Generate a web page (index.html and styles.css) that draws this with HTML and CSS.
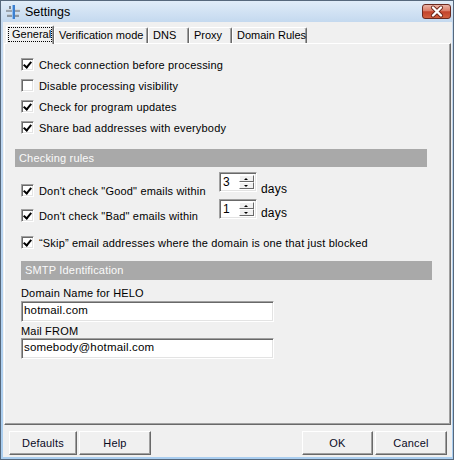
FILE: index.html
```html
<!DOCTYPE html>
<html>
<head>
<meta charset="utf-8">
<link rel="stylesheet" href="styles.css">
</head>
<body>
<div class="window">
  <div class="titlebar">
    <svg class="app-icon" width="16" height="16" viewBox="0 0 16 16">
      <rect x="1" y="5" width="14" height="3" fill="#9aa3ad"/>
      <rect x="1" y="5" width="14" height="1" fill="#d5dbe1"/>
      <rect x="2" y="10" width="12" height="3" fill="#8c96a0"/>
      <rect x="2" y="10" width="12" height="1" fill="#c9d0d6"/>
      <rect x="7" y="1" width="3" height="14" fill="#3b7fd0"/>
      <rect x="7" y="1" width="1" height="14" fill="#8fbcee"/>
      <rect x="4" y="2" width="2" height="3" fill="#7a838c"/>
    </svg>
    <span class="title">Settings</span>
    <div class="close">
      <svg width="28" height="15" viewBox="0 0 28 15">
        <path d="M10 3.5 L18 11.5 M18 3.5 L10 11.5" stroke="#6a2419" stroke-width="4" stroke-linecap="round"/>
        <path d="M10 3.5 L18 11.5 M18 3.5 L10 11.5" stroke="#fff" stroke-width="2.4" stroke-linecap="round"/>
      </svg>
    </div>
  </div>
  <div class="client">
    <div class="tabs">
      <div class="tab active w-general"><span class="focus">General</span></div>
      <div class="tab w-verif">Verification mode</div>
      <div class="tab w-dns">DNS</div>
      <div class="tab w-proxy">Proxy</div>
      <div class="tab w-rules">Domain Rules</div>
    </div>
    <div class="panel">
      <div class="checks">
        <div class="cb-row"><span class="box checked"></span><span>Check connection before processing</span></div>
        <div class="cb-row"><span class="box"></span><span>Disable processing visibility</span></div>
        <div class="cb-row"><span class="box checked"></span><span>Check for program updates</span></div>
        <div class="cb-row"><span class="box checked"></span><span>Share bad addresses with everybody</span></div>
      </div>
      <div class="section rules-bar">Checking rules</div>
      <div class="spin-row row-good">
        <div class="cb-label"><span class="box checked"></span><span>Don't check "Good" emails within</span></div>
        <div class="spinner"><span class="spin-val">3</span><span class="spin-btns"><span class="spin-btn up"></span><span class="spin-btn down"></span></span></div>
        <span class="days">days</span>
      </div>
      <div class="spin-row row-bad">
        <div class="cb-label"><span class="box checked"></span><span>Don't check "Bad" emails within</span></div>
        <div class="spinner"><span class="spin-val">1</span><span class="spin-btns"><span class="spin-btn up"></span><span class="spin-btn down"></span></span></div>
        <span class="days">days</span>
      </div>
      <div class="cb-row skip-row"><span class="box checked"></span><span>“Skip” email addresses where the domain is one that just blocked</span></div>
      <div class="section smtp-bar">SMTP Identification</div>
      <div class="field-label first">Domain Name for HELO</div>
      <div class="input">hotmail.com</div>
      <div class="field-label">Mail FROM</div>
      <div class="input second">somebody@hotmail.com</div>
    </div>
    <div class="buttons">
      <div class="btn w-defaults">Defaults</div>
      <div class="btn w-help">Help</div>
      <div class="spacer"></div>
      <div class="btn w-ok">OK</div>
      <div class="btn w-cancel">Cancel</div>
    </div>
  </div>
</div>
</body>
</html>
```
FILE: styles.css
```css
* { box-sizing: border-box; }
html, body { margin: 0; padding: 0; }
body {
  width: 454px;
  height: 460px;
  overflow: hidden;
  font-family: "Liberation Sans", Arial, sans-serif;
  font-size: 11px;
  letter-spacing: 0.18px;
  color: #000;
  background: #fff;
}
.window {
  width: 454px;
  height: 460px;
  display: flex;
  flex-direction: column;
  background: linear-gradient(#c7dbf1, #a9cdef);
  border: 1px solid #56687c;
}
.titlebar {
  height: 21px;
  flex: none;
  display: flex;
  align-items: center;
  padding-left: 4px;
  background: linear-gradient(#e0ecf8, #c4d9ef);
}
.app-icon { flex: none; margin-right: 4px; }
.title { font-size: 12.5px; letter-spacing: 0; color: #000; }
.close {
  margin-left: auto;
  margin-right: 2px;
  width: 29px;
  height: 15px;
  border: 1px solid #6b2a20;
  border-radius: 3px;
  background: linear-gradient(#eab3a5 0%, #db7d68 45%, #c3432b 52%, #d2603f 100%);
  display: flex;
  align-items: center;
  justify-content: center;
  overflow: hidden;
}
.close svg { display: block; flex: none; }
.client {
  flex: 1;
  margin: 0 1px 2px 2px;
  background: #f0f0f0;
  display: flex;
  flex-direction: column;
}
.tabs {
  height: 21px;
  flex: none;
  display: flex;
  align-items: flex-end;
  padding-left: 3px;
  position: relative;
  z-index: 1;
  font-size: 11px;
  letter-spacing: 0;
}
.tab {
  height: 16px;
  line-height: 14px;
  border: 1px solid;
  border-bottom: none;
  border-color: #fff #696969 transparent #fff;
  border-radius: 2px 2px 0 0;
  box-shadow: inset -1px 0 #a0a0a0;
  padding-left: 4px;
  white-space: nowrap;
  background: #f0f0f0;
}
.tab.active {
  height: 19px;
  margin-bottom: -1px;
  padding: 1px 1px 0 1px;
}
.tab .focus {
  display: block;
  height: 15px;
  line-height: 13px;
  border: 1px dotted #000;
  padding-left: 3px;
}
.w-general { width: 48px; }
.w-verif { width: 94px; }
.w-dns { width: 41px; }
.w-proxy { width: 43px; }
.w-rules { width: 75px; }

.panel {
  height: 382px;
  flex: none;
  margin: 0 1px;
  border: 1px solid;
  border-color: #fff #696969 #696969 #fff;
  box-shadow: inset -1px -1px #a0a0a0;
}
.checks { padding: 10px 0 0 16px; }
.cb-row {
  height: 21px;
  display: flex;
  align-items: center;
  white-space: nowrap;
}
.box {
  flex: none;
  width: 13px;
  height: 13px;
  margin-right: 5px;
  background: #fff;
  border: 1px solid;
  border-color: #a0a0a0 #fff #fff #a0a0a0;
  box-shadow: inset 1px 1px #696969, inset -1px -1px #e3e3e3;
  position: relative;
}
.box.checked::after {
  content: "";
  position: absolute;
  left: 3px;
  top: 1px;
  width: 3px;
  height: 6px;
  border: solid #000;
  border-width: 0 2px 2px 0;
  transform: rotate(40deg);
}
.section {
  height: 18px;
  line-height: 18px;
  background: #a9a9a9;
  color: #fafafa;
  padding-left: 4px;
}
.rules-bar {
  margin: 11px 0 0 10px;
  width: 412px;
}
.spin-row {
  height: 20px;
  display: flex;
  align-items: flex-start;
  padding-left: 16px;
  white-space: nowrap;
}
.row-good { margin-top: 5px; }
.row-bad { margin-top: 7px; }
.cb-label {
  width: 198px;
  height: 13px;
  display: flex;
  align-items: center;
  flex: none;
}
.row-good .cb-label { margin-top: 12px; }
.row-bad .cb-label { margin-top: 10px; }
.spinner {
  width: 38px;
  height: 20px;
  flex: none;
  display: flex;
  background: #fff;
  border: 1px solid;
  border-color: #a0a0a0 #fff #fff #a0a0a0;
  box-shadow: inset 1px 1px #696969, inset -1px -1px #e3e3e3;
  padding: 2px 2px 2px 3px;
}
.spin-val { flex: 1; font-size: 12px; line-height: 14px; }
.spin-btns {
  width: 15px;
  display: flex;
  flex-direction: column;
}
.spin-btn {
  flex: 1;
  background: #f0f0f0;
  border: 1px solid;
  border-color: #fff #696969 #696969 #fff;
  position: relative;
}
.spin-btn::after {
  content: "";
  position: absolute;
  left: 4px;
  top: 2px;
  border-left: 2px solid transparent;
  border-right: 2px solid transparent;
}
.spin-btn.up::after { border-bottom: 2px solid #000; }
.spin-btn.down::after { border-top: 2px solid #000; }
.days {
  margin-left: 4px;
  line-height: 13px;
  font-size: 12px;
}
.row-good .days { margin-top: 11px; }
.row-bad .days { margin-top: 8px; }
.skip-row {
  margin-top: 13px;
  padding-left: 16px;
}
.smtp-bar {
  margin: 8px 0 0 16px;
  width: 411px;
  height: 19px;
  line-height: 19px;
}
.field-label {
  margin: 3px 0 0 16px;
  line-height: 13px;
  height: 13px;
}
.field-label.first { margin-top: 7px; }
.input {
  margin: 1px 0 0 16px;
  width: 253px;
  height: 21px;
  line-height: 17px;
  padding-left: 2px;
  font-size: 11.5px;
  background: #fff;
  border: 1px solid;
  border-color: #a0a0a0 #fff #fff #a0a0a0;
  box-shadow: inset 1px 1px #696969, inset -1px -1px #e3e3e3;
}
.input.second { margin-top: 0; }
.buttons {
  flex: none;
  height: 24px;
  margin-top: 6px;
  display: flex;
  gap: 2px;
  padding: 0 5px 0 6px;
}
.spacer { flex: 1; }
.btn {
  height: 24px;
  line-height: 22px;
  text-align: center;
  background: #f0f0f0;
  border: 1px solid;
  border-color: #fff #696969 #696969 #fff;
  box-shadow: inset -1px -1px #a0a0a0;
  color: #0a0a1e;
}
.w-defaults { width: 68px; }
.w-help { width: 72px; }
.w-ok { width: 71px; }
.w-cancel { width: 72px; }
```
